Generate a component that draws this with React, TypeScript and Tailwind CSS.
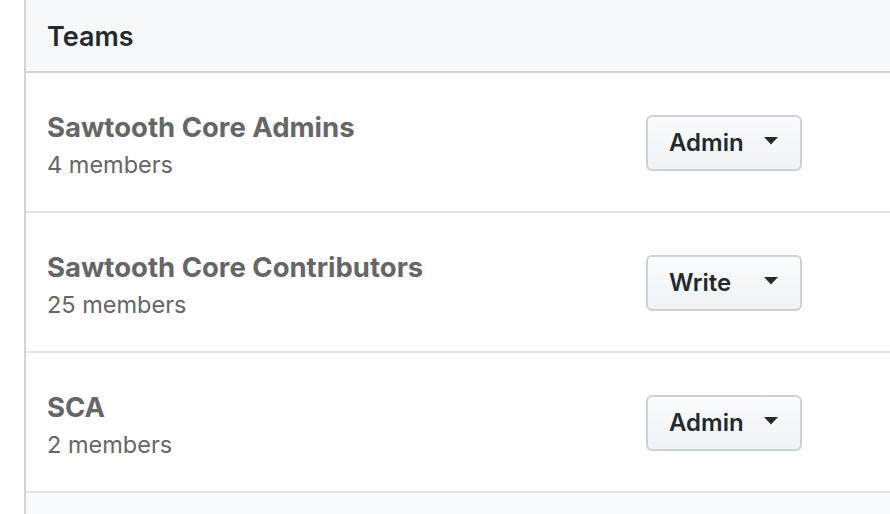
import React from 'react';

interface Team {
  name: string;
  members: number;
  role: string;
}

const teams: Team[] = [
  { name: 'Sawtooth Core Admins', members: 4, role: 'Admin' },
  { name: 'Sawtooth Core Contributors', members: 25, role: 'Write' },
  { name: 'SCA', members: 2, role: 'Admin' },
];

const RoleButton: React.FC<{ role: string }> = ({ role }) => {
  return (
    <button className="flex h-[56px] w-[156px] items-center rounded-[6px] border-2 border-[#cdd1d5] bg-gradient-to-b from-[#fafbfc] to-[#eff3f6] pl-[21px] pr-[22px] text-[24px] font-semibold text-[#24292e]">
      <span className="flex-1 text-left">{role}</span>
      <svg width="14" height="8" viewBox="0 0 14 8" className="mb-[4px] ml-[1px]">
        <path d="M0 0h14L7 7.5z" fill="#24292e" />
      </svg>
    </button>
  );
};

const App: React.FC = () => {
  return (
    <div className="h-[514px] w-[890px] overflow-hidden bg-white font-['Inter','Liberation_Sans',sans-serif]">
      <div className="ml-[24px] border-l-2 border-[#d1d5da]">
        <div className="flex h-[73px] items-center border-b-2 border-[#d1d5da] bg-[#f6f8fa] pl-[21px] pt-[3px]">
          <h3 className="text-[27px] font-semibold text-[#24292e]">Teams</h3>
        </div>
        {teams.map((team) => (
          <div
            key={team.name}
            className="flex h-[140px] items-center border-b-2 border-[#e1e4e8] pl-[21px] pr-[88px] pt-[2px]"
          >
            <div className="flex-1 pt-[3px]">
              <div className="text-[27.5px] font-bold leading-[40px] text-[#666666]">{team.name}</div>
              <div className="text-[23.5px] leading-[36px] text-[#666666]">{team.members} members</div>
            </div>
            <RoleButton role={team.role} />
          </div>
        ))}
        <div className="h-[40px] bg-[#fafbfc]" />
      </div>
    </div>
  );
};

export default App;
